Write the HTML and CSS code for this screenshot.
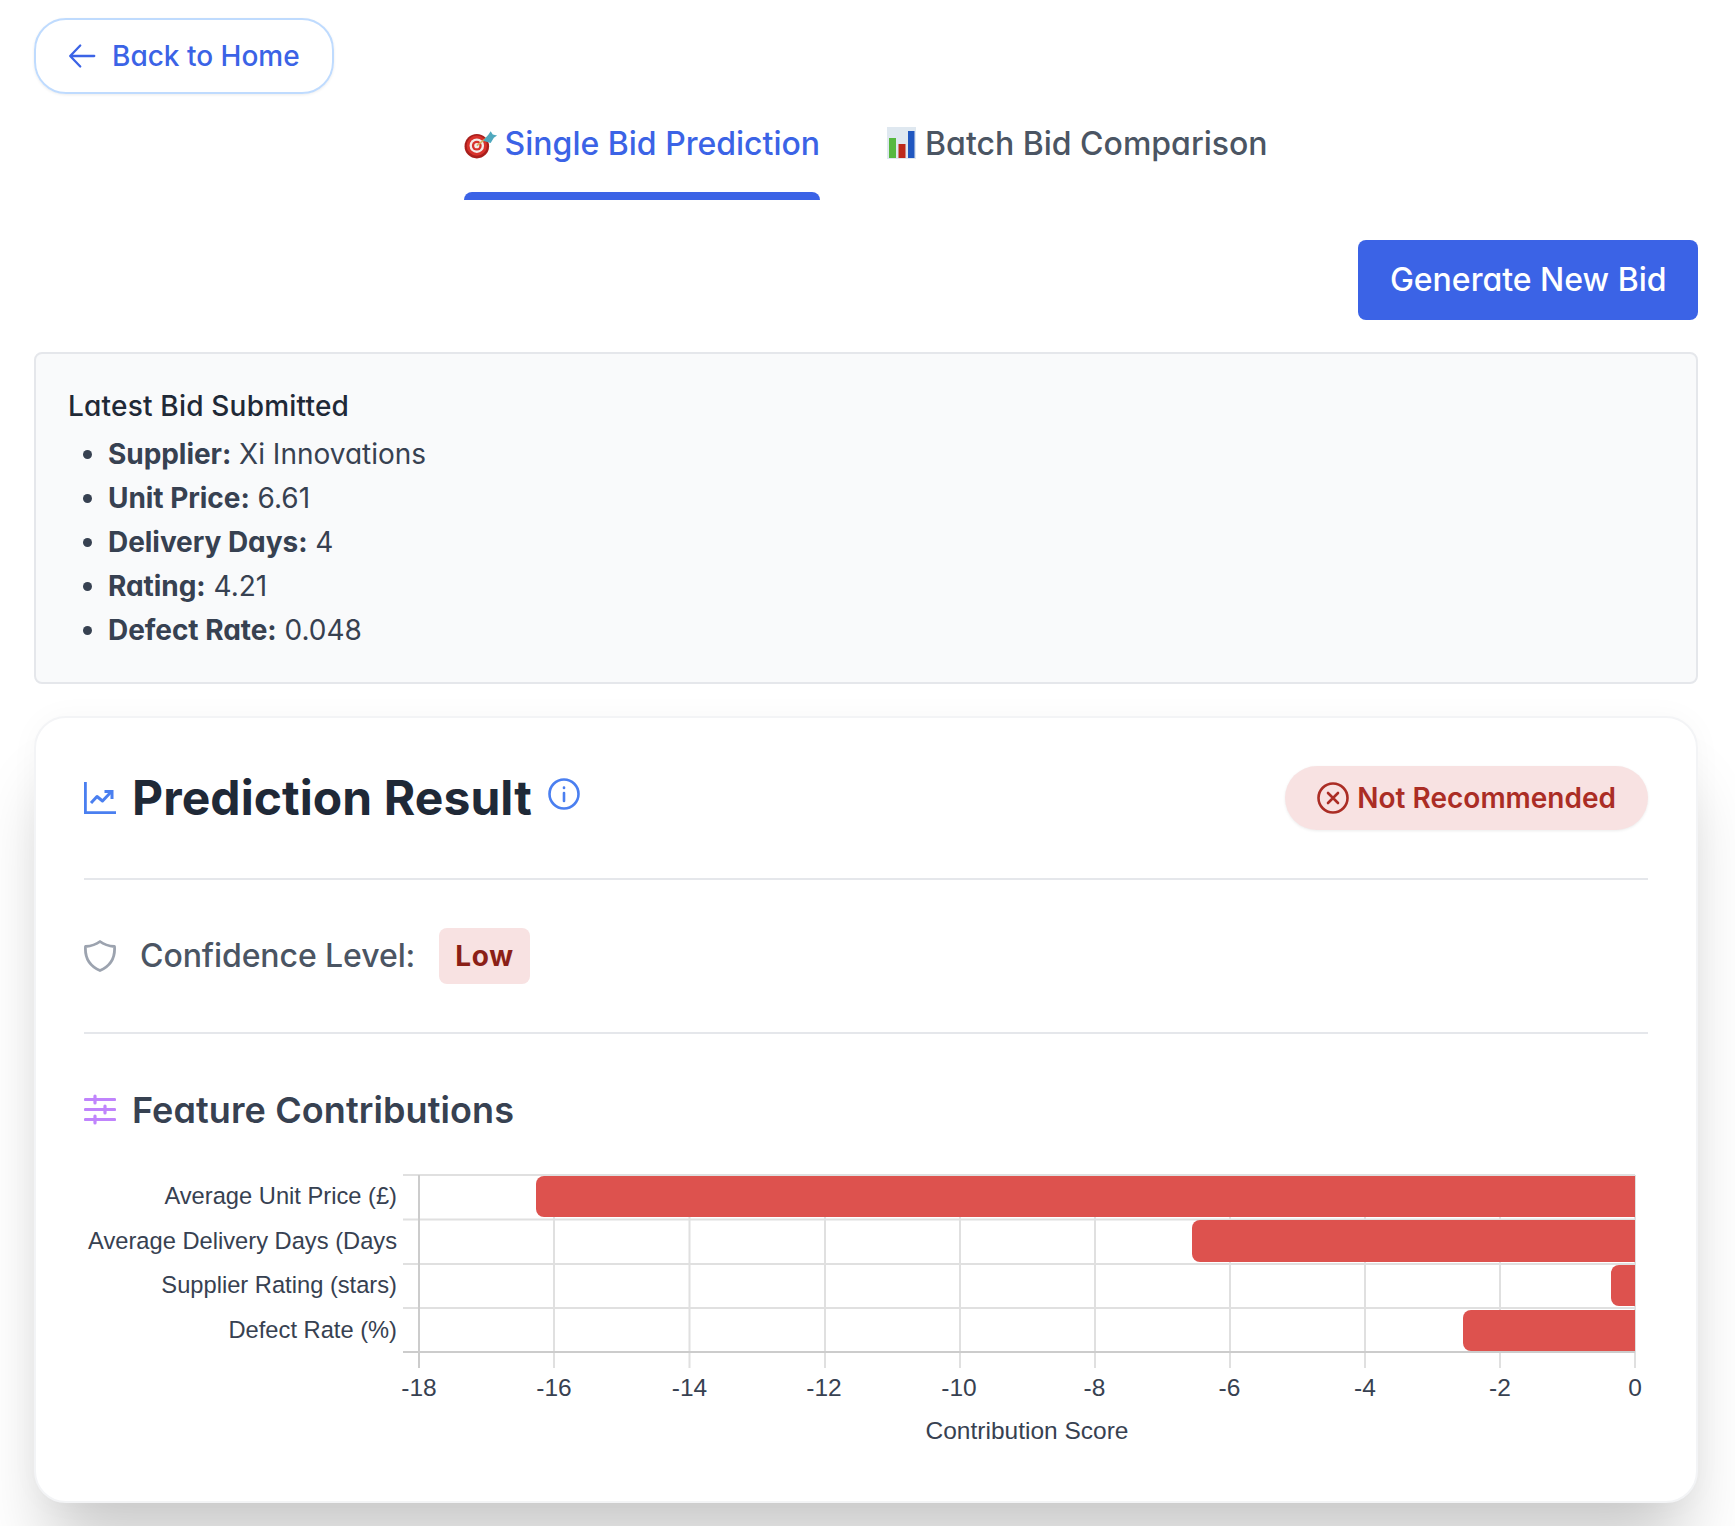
FILE: index.html
```html
<!DOCTYPE html>
<html lang="en">
<head>
  <meta charset="UTF-8">
  <title>Bid Prediction</title>
  <link rel="stylesheet" href="styles.css">
</head>
<body>
  <a class="back-link" href="#">
    <svg class="icon" viewBox="0 0 32 32" fill="none" stroke="currentColor" stroke-width="2.600" stroke-linecap="round" stroke-linejoin="round"><path d="M30 16H3M14 4 2.500 16 14 28"/></svg>
    Back to Home
  </a>

  <div class="tabs">
    <div class="tab active">
      <svg class="emoji" viewBox="0 0 32 30">
        <circle cx="12" cy="18" r="11.500" fill="#a81f1c"/>
        <circle cx="12" cy="17.500" r="9.500" fill="#d8322c"/>
        <circle cx="12" cy="17.500" r="6.800" fill="#f4ecea"/>
        <circle cx="12" cy="17.500" r="4.600" fill="#d8322c"/>
        <circle cx="12" cy="17.500" r="2.400" fill="#f4ecea"/>
        <path d="M12 17.500 24 8" stroke="#d8b060" stroke-width="1.500"/>
        <path d="M18 13l5-6 2-3 2 3 4 1-3 2-3 5z" fill="#4fa8bd"/>
      </svg>
      Single Bid Prediction
    </div>
    <div class="tab">
      <svg class="emoji emoji-bars" viewBox="0 0 29 32">
        <rect width="29" height="32" fill="#dfe8f0"/>
        <rect x="2" y="11" width="7" height="20" fill="#56b83f"/>
        <rect x="11.500" y="17" width="7" height="14" fill="#bd2a1c"/>
        <rect x="21" y="4" width="6.500" height="27" fill="#2057c0"/>
      </svg>
      Batch Bid Comparison
    </div>
  </div>

  <div class="actions">
    <button class="btn-primary">Generate New Bid</button>
  </div>

  <div class="latest-bid">
    <div class="latest-title">Latest Bid Submitted</div>
    <ul>
      <li><strong>Supplier:</strong> Xi Innovations</li>
      <li><strong>Unit Price:</strong> 6.61</li>
      <li><strong>Delivery Days:</strong> 4</li>
      <li><strong>Rating:</strong> 4.21</li>
      <li><strong>Defect Rate:</strong> 0.048</li>
    </ul>
  </div>

  <div class="card">
    <div class="card-header">
      <div class="title-group">
        <svg class="icon-lg icon-blue" viewBox="0 0 32 32" fill="none" stroke="currentColor" stroke-width="2.800"><path d="M1.400 0v30.600H32"/><path d="M7 21l6-6.500 5.500 4.500L27 10" stroke-width="3" stroke-linejoin="round"/><path d="M20.500 9.500H28V17" stroke-width="3"/></svg>
        <h2>Prediction Result</h2>
        <svg class="icon-lg icon-blue info" viewBox="0 0 32 32" fill="none" stroke="currentColor" stroke-width="2.600" stroke-linecap="round"><circle cx="16" cy="16" r="14.500"/><path d="M16 15v8"/><path d="M16 9.500v.5"/></svg>
      </div>
      <div class="status-pill">
        <svg class="icon-lg" viewBox="0 0 32 32" fill="none" stroke="currentColor" stroke-width="2.600" stroke-linecap="round"><circle cx="16" cy="16" r="14.500"/><path d="M11 11l10 10M21 11 11 21"/></svg>
        Not Recommended
      </div>
    </div>

    <div class="confidence">
      <svg class="icon-lg icon-gray" viewBox="0 0 32 32" fill="none" stroke="currentColor" stroke-width="2.800" stroke-linejoin="round"><path d="M16 1.500c4 3 9 4.500 14.500 5 .8 11-3 19-14.500 24C4.500 25.500.7 17.500 1.500 6.500 7 6 12 4.500 16 1.500z"/></svg>
      <span class="confidence-label">Confidence Level:</span>
      <span class="badge-low">Low</span>
    </div>

    <div class="features">
      <div class="features-title">
        <svg class="icon-lg icon-purple" viewBox="0 0 32 32" fill="none" stroke="currentColor" stroke-width="3.200" stroke-linecap="round"><path d="M1.500 5.500h29M1.500 15.500h29M1.500 25.500h29"/><path d="M11 2v7M21 12v7M11 22v7"/></svg>
        <h3>Feature Contributions</h3>
      </div>
      <!-- coordinates in the viewBox are page pixels, easier to check against the plot -->
      <svg class="chart" viewBox="84 1160 1564 293">
        <g class="grid">
          <path d="M403 1175H1635M403 1219.500H1635M403 1264H1635M403 1308H1635"/>
          <path d="M554 1175V1368M689.500 1175V1368M825 1175V1368M960 1175V1368M1095 1175V1368M1230 1175V1368M1365 1175V1368M1500 1175V1368M1635 1175V1368"/>
        </g>
        <path class="axis" d="M419 1175V1368M403 1352H1635"/>
        <g class="bars">
          <path d="M1635 1176V1217H544a8 8 0 0 1-8-8v-25a8 8 0 0 1 8-8z"/>
          <path d="M1635 1220V1262H1200a8 8 0 0 1-8-8v-26a8 8 0 0 1 8-8z"/>
          <path d="M1635 1265V1306H1619a8 8 0 0 1-8-8v-25a8 8 0 0 1 8-8z"/>
          <path d="M1635 1310V1351H1471a8 8 0 0 1-8-8v-25a8 8 0 0 1 8-8z"/>
        </g>
        <g class="y-labels">
          <text x="397" y="1204">Average Unit Price (£)</text>
          <text x="397" y="1249">Average Delivery Days (Days</text>
          <text x="397" y="1293">Supplier Rating (stars)</text>
          <text x="397" y="1338">Defect Rate (%)</text>
        </g>
        <g class="x-labels">
          <text x="419" y="1396">-18</text>
          <text x="554" y="1396">-16</text>
          <text x="689.500" y="1396">-14</text>
          <text x="824" y="1396">-12</text>
          <text x="959" y="1396">-10</text>
          <text x="1094.500" y="1396">-8</text>
          <text x="1229.500" y="1396">-6</text>
          <text x="1365" y="1396">-4</text>
          <text x="1500" y="1396">-2</text>
          <text x="1635" y="1396">0</text>
          <text x="1027" y="1439">Contribution Score</text>
        </g>
      </svg>
    </div>
  </div>
</body>
</html>
```

FILE: styles.css
```css
* {
  box-sizing: border-box;
}
body {
  margin: 0;
  padding: 18px 37px 23px 34px;
  background: #fff;
  color: #374151;
  font-family: Inter, "Noto Sans", sans-serif;
  font-feature-settings: "cv11";
}
svg {
  display: block;
  flex-shrink: 0;
}

.back-link {
  display: inline-flex;
  align-items: center;
  gap: 16px;
  height: 76px;
  padding: 0 32px;
  border: 2px solid #bfdbfe;
  border-radius: 32px;
  box-shadow: 0 1px 3px rgba(0, 0, 0, 0.08);
  color: #3b63e6;
  font-size: 28px;
  font-weight: 500;
  text-decoration: none;
}
.icon {
  width: 28px;
  height: 28px;
}

.tabs {
  display: flex;
  justify-content: center;
  gap: 67px;
  margin-top: 26px;
}
.tab {
  position: relative;
  display: flex;
  align-items: center;
  gap: 6px;
  height: 80px;
  padding-bottom: 34px;
  color: #4b5563;
  font-size: 32px;
  font-weight: 500;
}
.tab.active {
  color: #3b63e6;
}
.tab.active::after {
  content: "";
  position: absolute;
  left: 0;
  right: 0;
  bottom: 0;
  height: 8px;
  background: #3b63e6;
  border-radius: 8px 8px 0 0;
}
.emoji {
  height: 32px;
  width: auto;
}
.emoji-bars {
  margin-right: 3px;
}

.actions {
  display: flex;
  justify-content: flex-end;
  margin-top: 40px;
}
.btn-primary {
  height: 80px;
  padding: 0 31.500px 2px;
  border: 0;
  border-radius: 8px;
  background: #3b63e6;
  color: #fff;
  font-family: inherit;
  font-feature-settings: inherit;
  font-size: 32px;
  font-weight: 500;
}

.latest-bid {
  margin-top: 32px;
  padding: 32px 32px 30px;
  background: #f9fafb;
  border: 2px solid #e5e7eb;
  border-radius: 8px;
}
.latest-title {
  height: 40px;
  line-height: 40px;
  color: #1f2937;
  font-size: 28px;
  font-weight: 500;
  letter-spacing: 0.2px;
}
.latest-bid ul {
  margin: 6px 0 0;
  padding-left: 40px;
}
.latest-bid li {
  height: 44px;
  line-height: 44px;
  font-size: 28px;
}
.latest-bid strong {
  letter-spacing: -0.05px;
}

.card {
  margin-top: 32px;
  padding: 48px 48px 48px;
  background: #fff;
  border: 2px solid #f3f4f6;
  border-radius: 32px;
  box-shadow: 0 60px 70px -15px rgba(0, 0, 0, 0.2), 0 0 30px rgba(0, 0, 0, 0.03);
}
.card-header {
  display: flex;
  justify-content: space-between;
  align-items: center;
  padding-bottom: 48px;
  border-bottom: 2px solid #e5e7eb;
}
.title-group {
  display: flex;
  align-items: center;
  gap: 16px;
}
.title-group h2 {
  margin: 0 0 2px;
  color: #1f2937;
  font-size: 48px;
  font-weight: 700;
  letter-spacing: 0.08px;
}
.icon-lg {
  width: 32px;
  height: 32px;
}
.icon-blue {
  color: #4a7ff0;
}
.icon-gray {
  color: #9ca3af;
}
.icon-purple {
  color: #c084fc;
}
.info {
  margin-bottom: 8px;
}
.status-pill {
  display: flex;
  align-items: center;
  gap: 8px;
  height: 64px;
  padding: 0 32px;
  background: #f8e2e2;
  border-radius: 32px;
  box-shadow: 0 1px 3px rgba(0, 0, 0, 0.08);
  color: #ab2d25;
  font-size: 28px;
  font-weight: 600;
}

.confidence {
  display: flex;
  align-items: center;
  padding: 48px 0;
  border-bottom: 2px solid #e5e7eb;
}
.confidence-label {
  margin: 0 24px 2px;
  color: #4b5563;
  font-size: 32px;
  font-weight: 500;
  letter-spacing: -0.08px;
}
.badge-low {
  padding: 0 16px;
  height: 56px;
  line-height: 56px;
  background: #f8e2e2;
  border-radius: 8px;
  color: #8b1f17;
  font-size: 28px;
  font-weight: 700;
  letter-spacing: 0.7px;
}

.features {
  padding-top: 48px;
}
.features-title {
  display: flex;
  align-items: center;
  gap: 16px;
  height: 56px;
}
.features-title h3 {
  margin: 0;
  font-size: 36px;
  font-weight: 600;
  letter-spacing: 0.1px;
}
.chart {
  width: 100%;
  height: 293px;
  margin-top: 22px;
  font-family: "Liberation Sans", Arial, sans-serif;
}
.grid path {
  fill: none;
  stroke: #e0e0e0;
  stroke-width: 2;
}
.axis {
  fill: none;
  stroke: #cccccc;
  stroke-width: 2;
}
.bars path {
  fill: #dd524e;
}
.chart text {
  fill: #374151;
}
.y-labels text {
  font-size: 23.700px;
  text-anchor: end;
}
.x-labels text {
  font-size: 24.500px;
  text-anchor: middle;
}
```
